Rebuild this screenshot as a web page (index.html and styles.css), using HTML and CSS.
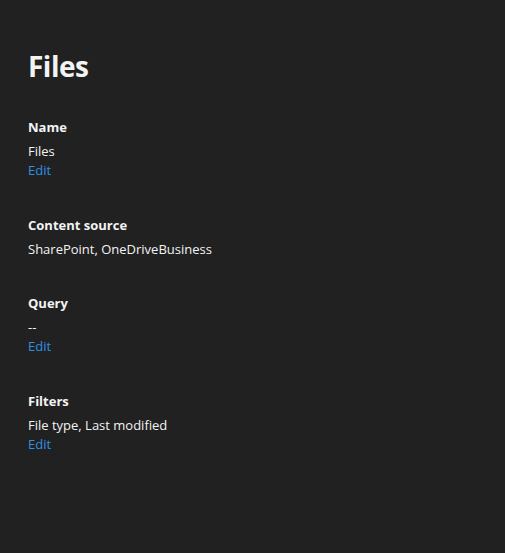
FILE: index.html
```html
<!DOCTYPE html>
<html lang="en">
<head>
<meta charset="utf-8">
<link rel="stylesheet" href="styles.css">
</head>
<body>
<main class="panel">
  <h1 class="title">Files</h1>
  <section class="field">
    <div class="label">Name</div>
    <div class="value">Files</div>
    <a class="edit" href="#">Edit</a>
  </section>
  <section class="field">
    <div class="label">Content source</div>
    <div class="value">SharePoint, OneDriveBusiness</div>
  </section>
  <section class="field">
    <div class="label">Query</div>
    <div class="value">--</div>
    <a class="edit" href="#">Edit</a>
  </section>
  <section class="field">
    <div class="label">Filters</div>
    <div class="value">File type, Last modified</div>
    <a class="edit" href="#">Edit</a>
  </section>
</main>
</body>
</html>
```

FILE: styles.css
```css
html, body {
  margin: 0;
  padding: 0;
  background: #212121;
  height: 100%;
}
body {
  font-family: "Open Sans", "Noto Sans", sans-serif;
  color: #f3f3f3;
}
.panel {
  padding: 46px 28px 0 28px;
  display: flex;
  flex-direction: column;
  align-items: flex-start;
}
.title {
  margin: 0 0 31px 0;
  font-size: 28px;
  line-height: 40px;
  font-weight: 700;
  letter-spacing: -0.5px;
}
.field {
  display: flex;
  flex-direction: column;
  align-items: flex-start;
  margin-bottom: 35px;
}
.label {
  font-size: 13px;
  line-height: 20px;
  font-weight: 700;
  margin-bottom: 5px;
}
.value {
  font-size: 13px;
  line-height: 18px;
}
.edit {
  font-size: 13px;
  line-height: 20px;
  color: #3090e3;
  text-decoration: none;
}
```
